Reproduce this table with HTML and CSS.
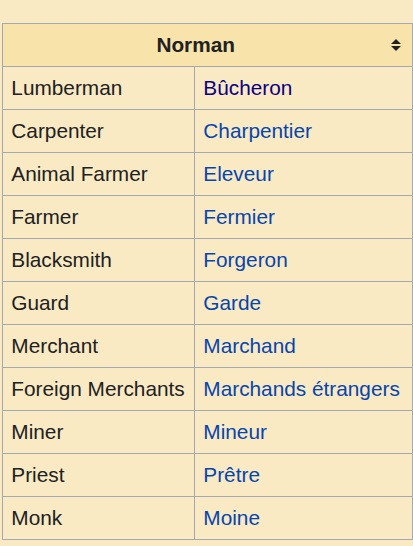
FILE: index.html
```html
<!DOCTYPE html>
<html>
<head>
<meta charset="utf-8">
<link rel="stylesheet" href="styles.css">
</head>
<body>
<table class="wikitable">
  <colgroup><col class="col-en"><col class="col-fr"></colgroup>
  <thead>
    <tr><th colspan="2" class="sortable">Norman<span class="sort-icon"><svg width="10" height="12" viewBox="0 0 10 12"><path d="M5 0 L10 5 L0 5 Z" fill="#202122"/><path d="M0 7 L10 7 L5 12 Z" fill="#202122"/></svg></span></th></tr>
  </thead>
  <tbody>
    <tr><td>Lumberman</td><td><a class="visited" href="#">Bûcheron</a></td></tr>
    <tr><td>Carpenter</td><td><a href="#">Charpentier</a></td></tr>
    <tr><td>Animal Farmer</td><td><a href="#">Eleveur</a></td></tr>
    <tr><td>Farmer</td><td><a href="#">Fermier</a></td></tr>
    <tr><td>Blacksmith</td><td><a href="#">Forgeron</a></td></tr>
    <tr><td>Guard</td><td><a href="#">Garde</a></td></tr>
    <tr><td>Merchant</td><td><a href="#">Marchand</a></td></tr>
    <tr><td>Foreign Merchants</td><td><a href="#">Marchands étrangers</a></td></tr>
    <tr><td>Miner</td><td><a href="#">Mineur</a></td></tr>
    <tr><td>Priest</td><td><a href="#">Prêtre</a></td></tr>
    <tr><td>Monk</td><td><a href="#">Moine</a></td></tr>
  </tbody>
</table>
</body>
</html>
```
FILE: styles.css
```css
html, body {
  margin: 0;
  padding: 0;
  background: #f9eac4;
}
body {
  padding: 23px 0 0 2px;
  font-family: "Liberation Sans", Arial, sans-serif;
  font-size: 20.8px;
  color: #202122;
}
.wikitable {
  border-collapse: collapse;
  border: 1px solid #a2a9b1;
  background: #f9eac4;
  width: 410px;
  table-layout: fixed;
}
.col-en { width: 192px; }
.col-fr { width: 218px; }
.wikitable th, .wikitable td {
  border: 1px solid #a2a9b1;
  padding: 0.2em 0.4em;
  line-height: 1.6;
  height: 43px;
  box-sizing: border-box;
  white-space: nowrap;
}
.wikitable th {
  background: #f8e4aa;
  font-weight: bold;
  text-align: center;
  position: relative;
  padding-right: 32px;
}
.sort-icon {
  position: absolute;
  right: 11px;
  top: 15px;
  width: 10px;
  height: 12px;
  display: block;
}
.sort-icon svg { display: block; }
.wikitable td { text-align: left; }
a { color: #0645ad; text-decoration: none; }
a.visited { color: #0b0080; }
```
